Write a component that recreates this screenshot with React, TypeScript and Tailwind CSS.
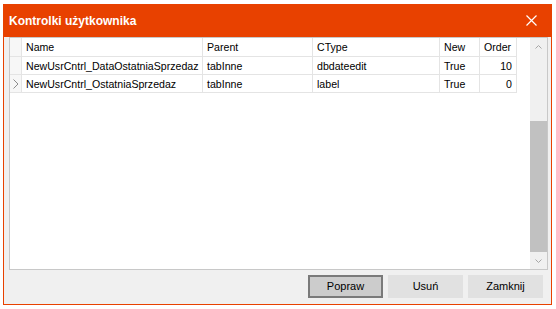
import { FC } from "react";

type Row = {
  name: string;
  parent: string;
  ctype: string;
  isNew: string;
  order: number;
  current?: boolean;
};

const rows: Row[] = [
  {
    name: "NewUsrCntrl_DataOstatniaSprzedaz",
    parent: "tabInne",
    ctype: "dbdateedit",
    isNew: "True",
    order: 10,
  },
  {
    name: "NewUsrCntrl_OstatniaSprzedaz",
    parent: "tabInne",
    ctype: "label",
    isNew: "True",
    order: 0,
    current: true,
  },
];

const cols = "grid grid-cols-[12px_181px_110px_127px_40px_37px]";
const cell = "h-[18px] border-r border-b border-[#e4e4e4] px-[4px] leading-[18px] whitespace-nowrap overflow-hidden";

const Chevron: FC<{ up?: boolean }> = ({ up }) => (
  <svg width="7" height="4" viewBox="0 0 7 4" className={up ? "" : "rotate-180"}>
    <path d="M0.5 3.5 L3.5 0.5 L6.5 3.5" fill="none" stroke="#a6a6a6" strokeWidth="1" />
  </svg>
);

const ControlsGrid: FC = () => (
  <div className="flex h-[233px] border border-[#c8c8c8] bg-white">
    <div className="flex-1">
      <div className={cols}>
        <div className="h-[19px] border-r border-b border-[#e4e4e4] bg-[#f7f7f7]" />
        {["Name", "Parent", "CType", "New", "Order"].map((h) => (
          <div key={h} className="h-[19px] border-r border-b border-[#e4e4e4] px-[4px] leading-[19px]">
            {h}
          </div>
        ))}
      </div>
      {rows.map((r) => (
        <div key={r.name} className={cols}>
          <div className="flex h-[18px] items-center justify-center border-r border-b border-[#e4e4e4] bg-[#f7f7f7]">
            {r.current && (
              <svg width="6" height="10" viewBox="0 0 6 10">
                <path d="M0.5 0.5 L5 5 L0.5 9.5" fill="none" stroke="#8c8c8c" strokeWidth="1" />
              </svg>
            )}
          </div>
          <div className={cell}>{r.name}</div>
          <div className={cell}>{r.parent}</div>
          <div className={cell}>{r.ctype}</div>
          <div className={cell}>{r.isNew}</div>
          <div className={`${cell} text-right`}>{r.order}</div>
        </div>
      ))}
    </div>
    <div className="flex w-[17px] flex-col bg-[#f0f0f0]">
      <div className="flex h-[17px] items-center justify-center">
        <Chevron up />
      </div>
      <div className="flex-1 pt-[66px]">
        <div className="h-[131px] bg-[#c1c1c1]" />
      </div>
      <div className="flex h-[17px] items-center justify-center">
        <Chevron />
      </div>
    </div>
  </div>
);

export default function App() {
  return (
    <div className="h-[309px] w-[556px] bg-white pt-[4px] pl-[3px] font-['Liberation_Sans',Arial,sans-serif] text-[10.6px] text-black">
      <div className="flex h-[301px] w-[549px] flex-col border-x border-b border-[#e84100] bg-[#f0f0f0]">
        <div className="flex h-[33px] items-center justify-between bg-[#e84100] pr-[14px] pl-[5px]">
          <span className="text-[12px] font-bold text-white">Kontrolki użytkownika</span>
          <svg width="11" height="11" viewBox="0 0 11 11">
            <path d="M0.5 0.5 L10.5 10.5 M10.5 0.5 L0.5 10.5" stroke="#fff" strokeWidth="1.2" />
          </svg>
        </div>
        <div className="pr-[3px] pl-[5px]">
          <ControlsGrid />
        </div>
        <div className="flex justify-end gap-[5px] pt-[5px] pr-[8px] text-[11px]">
          <button className="h-[23px] w-[75px] border-2 border-[#7a7a7a] bg-[#cccccc]">Popraw</button>
          <button className="h-[23px] w-[75px] bg-[#e1e1e1]">Usuń</button>
          <button className="h-[23px] w-[75px] bg-[#e1e1e1]">Zamknij</button>
        </div>
      </div>
    </div>
  );
}
